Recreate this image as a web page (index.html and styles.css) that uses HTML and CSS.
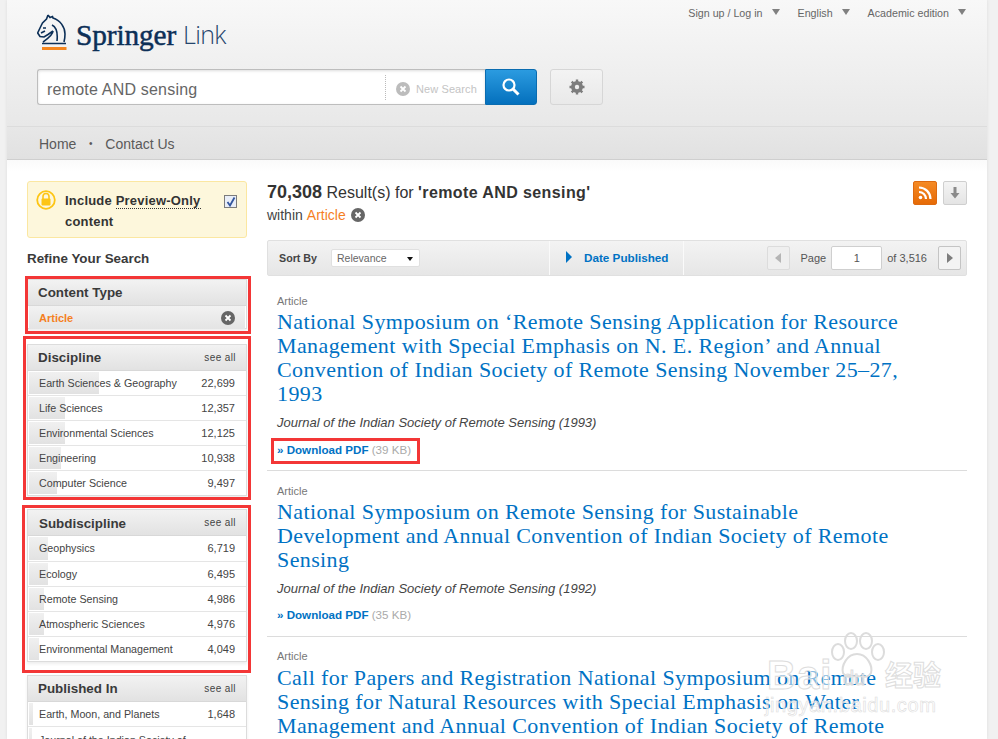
FILE: index.html
```html
<!DOCTYPE html>
<html lang="en">
<head>
<meta charset="utf-8">
<title>Springer Link</title>
<link rel="stylesheet" href="styles.css">
</head>
<body>
<div class="page">
  <header class="header">
    <div class="top">
      <a class="logo">
        <svg class="horse" viewBox="0 0 30 37" width="30" height="37">
          <path d="M11 1 L9.500 5 L5.500 9 L3 14 L0.700 19 L3 22.500 L7 23 L11 20.500 L16 17 M11 1 L13 3.500 L15.500 2.500 L16 4 C23 6 28 13 28 20 C28 24 27.500 26 27 28 M16 17 C16 21 10 25 6 28 M15 11 C19 13 21 18 20 27 M6 14 L9 14 M4 19 L8 17 M5 29.500 H29" fill="none" stroke="#0c2f57" stroke-width="1.600"/>
          <rect x="5" y="33" width="24.500" height="3" fill="#f5861f"/>
        </svg>
        <span class="brand">Springer</span><span class="brand-link">Link</span>
      </a>
      <nav class="account">
        <span class="drop">Sign up / Log in</span>
        <span class="drop">English</span>
        <span class="drop">Academic edition</span>
      </nav>
    </div>
    <div class="searchrow">
      <div class="searchbox">
        <span class="query">remote AND sensing</span>
        <span class="newsearch"><svg class="x" viewBox="0 0 14 14" width="14" height="14"><circle cx="7" cy="7" r="7" fill="#bcbcbc"/><path d="M4.500 4.500 L9.500 9.500 M9.500 4.500 L4.500 9.500" stroke="#fff" stroke-width="1.800"/></svg>New Search</span>
      </div>
      <button class="go"><svg viewBox="0 0 20 20" width="20" height="20"><circle cx="8" cy="8" r="5.500" fill="none" stroke="#fff" stroke-width="2.200"/><path d="M12 12 L17.500 17.500" stroke="#fff" stroke-width="3"/></svg></button>
      <button class="gear"><svg viewBox="0 0 16 16" width="16" height="16"><circle cx="8" cy="8" r="4.500" fill="none" stroke="#7d7d7d" stroke-width="3"/><path d="M8 0.500 V15.500 M0.500 8 H15.500 M2.700 2.700 L13.300 13.300 M13.300 2.700 L2.700 13.300" stroke="#7d7d7d" stroke-width="2.400"/><circle cx="8" cy="8" r="2.200" fill="#eee"/></svg></button>
    </div>
  </header>
  <nav class="crumbs"><a>Home</a><span class="dot">•</span><a>Contact Us</a></nav>
  <div class="content">
    <aside class="side">
      <div class="notice">
        <svg class="lock" viewBox="0 0 20 20" width="20" height="20"><circle cx="10" cy="10" r="8.800" fill="none" stroke="#fdc514" stroke-width="1.800"/><rect x="5.500" y="8.500" width="9" height="7" rx="1" fill="#fdc514"/><path d="M7 9 V6.500 A3 3 0 0 1 13 6.500 V9" fill="none" stroke="#fdc514" stroke-width="1.600"/></svg>
        <p class="notice-text">Include <span class="dotted">Preview-Only</span> content</p>
        <span class="check"><svg viewBox="0 0 10 10" width="10" height="10"><path d="M1.500 5 L4 8.500 L8.500 0.500" fill="none" stroke="#33569e" stroke-width="1.800"/></svg></span>
      </div>
      <h2 class="refine">Refine Your Search</h2>

      <section class="facet f-type">
        <h3 class="facet-head"><span>Content Type</span></h3>
        <div class="active-row"><span>Article</span><svg viewBox="0 0 14 14" width="14" height="14"><circle cx="7" cy="7" r="7" fill="#666"/><path d="M4.500 4.500 L9.500 9.500 M9.500 4.500 L4.500 9.500" stroke="#fff" stroke-width="1.800"/></svg></div>
      </section>

      <section class="facet f-disc">
        <h3 class="facet-head"><span>Discipline</span><a class="all">see all</a></h3>
        <ol class="rows">
          <li class="row"><i class="bar" style="width:70px"></i><span class="name">Earth Sciences &amp; Geography</span><span class="num">22,699</span></li>
          <li class="row"><i class="bar" style="width:36px"></i><span class="name">Life Sciences</span><span class="num">12,357</span></li>
          <li class="row"><i class="bar" style="width:36px"></i><span class="name">Environmental Sciences</span><span class="num">12,125</span></li>
          <li class="row"><i class="bar" style="width:32px"></i><span class="name">Engineering</span><span class="num">10,938</span></li>
          <li class="row"><i class="bar" style="width:28px"></i><span class="name">Computer Science</span><span class="num">9,497</span></li>
        </ol>
      </section>

      <section class="facet f-sub">
        <h3 class="facet-head"><span class="nudge">Subdiscipline</span><a class="all">see all</a></h3>
        <ol class="rows">
          <li class="row"><i class="bar" style="width:19px"></i><span class="name">Geophysics</span><span class="num">6,719</span></li>
          <li class="row"><i class="bar" style="width:19px"></i><span class="name">Ecology</span><span class="num">6,495</span></li>
          <li class="row"><i class="bar" style="width:15px"></i><span class="name">Remote Sensing</span><span class="num">4,986</span></li>
          <li class="row"><i class="bar" style="width:15px"></i><span class="name">Atmospheric Sciences</span><span class="num">4,976</span></li>
          <li class="row"><i class="bar" style="width:10px"></i><span class="name">Environmental Management</span><span class="num">4,049</span></li>
        </ol>
      </section>

      <section class="facet">
        <h3 class="facet-head"><span>Published In</span><a class="all">see all</a></h3>
        <ol class="rows">
          <li class="row"><i class="bar" style="width:4px"></i><span class="name">Earth, Moon, and Planets</span><span class="num">1,648</span></li>
          <li class="row"><i class="bar" style="width:3px"></i><span class="name">Journal of the Indian Society of</span></li>
        </ol>
      </section>
    </aside>

    <main class="main">
      <div class="summary">
        <div>
          <h1 class="count"><b>70,308</b> Result(s) for <b class="q">'remote AND sensing'</b></h1>
          <p class="within">within <a class="orange">Article</a><svg class="x" viewBox="0 0 14 14" width="14" height="14"><circle cx="7" cy="7" r="7" fill="#666"/><path d="M4.500 4.500 L9.500 9.500 M9.500 4.500 L4.500 9.500" stroke="#fff" stroke-width="1.800"/></svg></p>
        </div>
        <div class="tools">
          <a class="rss"><svg viewBox="0 0 14 14" width="14" height="14"><circle cx="2.500" cy="11.500" r="1.800" fill="#fff"/><path d="M1 6 A7 7 0 0 1 8 13 M1 1.500 A11.500 11.500 0 0 1 12.500 13" fill="none" stroke="#fff" stroke-width="2.200"/></svg></a>
          <a class="save"><svg viewBox="0 0 10 12" width="10" height="12"><path d="M3.500 0 H6.500 V6 H9.500 L5 11.500 L0.500 6 H3.500 Z" fill="#8a8a8a"/></svg></a>
        </div>
      </div>

      <div class="sortbar">
        <div class="sort"><b>Sort By</b><span class="select">Relevance<i class="caret"></i></span></div>
        <a class="date"><i class="tri-blue"></i>Date Published</a>
        <div class="pager">
          <span class="pbtn"><i class="tri-l"></i></span>
          <span>Page</span>
          <span class="pinput">1</span>
          <span>of 3,516</span>
          <span class="pbtn next"><i class="tri-r"></i></span>
        </div>
      </div>

      <ol class="results">
        <li class="result r1">
          <p class="kind">Article</p>
          <h2 class="title">National Symposium on ‘Remote Sensing Application for Resource<br>Management with Special Emphasis on N. E. Region’ and Annual<br>Convention of Indian Society of Remote Sensing November 25–27,<br>1993</h2>
          <p class="journal">Journal of the Indian Society of Remote Sensing (1993)</p>
          <p class="pdf"><a>» Download PDF</a> <span>(39 KB)</span></p>
        </li>
        <li class="result r2">
          <p class="kind">Article</p>
          <h2 class="title">National Symposium on Remote Sensing for Sustainable<br>Development and Annual Convention of Indian Society of Remote<br>Sensing</h2>
          <p class="journal">Journal of the Indian Society of Remote Sensing (1992)</p>
          <p class="pdf"><a>» Download PDF</a> <span>(35 KB)</span></p>
        </li>
        <li class="result r3">
          <p class="kind">Article</p>
          <h2 class="title">Call for Papers and Registration National Symposium on Remote<br>Sensing for Natural Resources with Special Emphasis on Water<br>Management and Annual Convention of Indian Society of Remote</h2>
        </li>
      </ol>
    </main>
  </div>

  <i class="mark m1"></i><i class="mark m2"></i><i class="mark m3"></i><i class="mark m4"></i>

  <div class="watermark">
    <svg class="paw" viewBox="0 0 60 50" width="60" height="50"><g fill="none" stroke="#dcdcdc" stroke-width="2"><ellipse cx="11" cy="20" rx="6" ry="8"/><ellipse cx="24" cy="9" rx="6" ry="8"/><ellipse cx="39" cy="9" rx="6" ry="8"/><ellipse cx="51" cy="20" rx="6" ry="8"/><path d="M30 22 C40 22 46 34 44 41 C41 47 35 44 30 44 C25 44 19 47 16 41 C14 34 20 22 30 22 Z"/></g></svg>
    <span class="wm-bai">Bai</span><span class="wm-du">du</span><span class="wm-cn">经验</span>
    <span class="wm-url">jingyan.baidu.com</span>
  </div>
</div>
</body>
</html>
```
FILE: styles.css
```css
* { box-sizing: border-box; }
html, body { margin: 0; height: 739px; overflow: hidden; }
body { background: #f1f1f1; font-family: "Liberation Sans", Arial, sans-serif; color: #333; }
p, h1, h2, h3, ol { margin: 0; padding: 0; font-weight: normal; }
ol { list-style: none; }
button { padding: 0; cursor: pointer; }
.page { position: relative; width: 980px; height: 739px; margin-left: 7px; background: #fff; overflow: hidden; box-shadow: 0 0 3px #ddd; }

.header { height: 127px; padding: 0 20px; background: linear-gradient(#f8f8f8, #e8e8e8); border-bottom: 1px solid #dcdcdc; }
.top { display: flex; justify-content: space-between; align-items: flex-start; height: 69px; }
.logo { display: flex; align-items: flex-start; padding: 14px 0 0 10px; }
.horse { display: block; flex: none; }
.brand { margin: 1px 0 0 9px; font: 29.300px/40px "Liberation Serif", serif; color: #0c2f57; letter-spacing: -0.1px; -webkit-text-stroke: 0.5px #0c2f57; }
.brand-link { margin: 2px 0 0 7px; font: 300 25px/36px "Open Sans", sans-serif; color: #25456d; letter-spacing: -0.7px; }
.account { display: flex; gap: 18px; padding: 7px 0 0; margin-right: 1px; font-size: 10.700px; line-height: 13px; color: #666; }
.drop { display: flex; align-items: center; gap: 9px; }
.drop::after { content: ""; border: 4px solid transparent; border-top: 6px solid #808080; border-bottom: 0; margin-top: -3px; }

.searchrow { display: flex; }
.searchbox { display: flex; justify-content: space-between; align-items: center; width: 448px; height: 36px; margin-left: 10px; padding-left: 9px; background: #fff; border: 1px solid #bdbdbd; border-right: 0; border-radius: 3px 0 0 3px; box-shadow: inset 0 1px 3px #ddd; }
.query { padding-top: 6px; font-size: 16px; color: #666; letter-spacing: 0.2px; }
.newsearch { display: flex; align-items: center; height: 25px; width: 100px; padding: 4px 0 0 10px; border-left: 1px dotted #bbb; font-size: 11px; line-height: 15px; color: #c4c4c4; letter-spacing: 0.1px; }
.newsearch .x { margin-right: 6px; }
.go { display: flex; align-items: center; justify-content: center; width: 52px; height: 36px; border: 1px solid #0a6cb0; border-radius: 0 3px 3px 0; background: linear-gradient(#2b9be0, #0470bd); }
.gear { display: flex; align-items: center; justify-content: center; width: 53px; height: 36px; margin-left: 13px; border: 1px solid #d6d6d6; border-radius: 3px; background: linear-gradient(#f3f3f3, #e9e9e9); }

.crumbs { display: flex; align-items: center; height: 33px; padding: 1px 0 0 32px; background: linear-gradient(#e7e7e7, #e1e1e1); border-bottom: 1px solid #cfcfcf; font-size: 14px; color: #5a5a5a; }
.dot { width: 29px; text-align: center; font-size: 10px; }

.content { display: flex; gap: 20px; padding: 21px 20px 0; height: 579px; background: linear-gradient(#fafafa, #fff 12px); }
.side { flex: none; width: 220px; }
.main { flex: none; width: 700px; }

.notice { display: flex; position: relative; height: 57px; padding: 8px 0 0 8px; background: #fdf7dc; border: 1px solid #fbe7a1; border-radius: 3px; }
.lock { flex: none; margin-top: 0; }
.notice-text { width: 145px; margin-left: 9px; font-size: 13px; line-height: 21px; font-weight: bold; color: #333; letter-spacing: 0.2px; }
.dotted { border-bottom: 1px dotted #333; }
.check { position: absolute; right: 9px; top: 13px; display: flex; align-items: center; justify-content: center; width: 13px; height: 13px; background: #e9eef8; border: 1px solid #7c7c7c; }

.refine { height: 41px; padding-top: 13px; font-size: 13.400px; line-height: 16px; font-weight: bold; color: #3a3a3a; }

.facet { margin-bottom: 13px; border: 1px solid #dcdcdc; box-shadow: 0 2px 3px #eee; }
.f-type { margin-bottom: 15px; height: 50px; }
.f-disc { height: 152px; }
.f-sub { height: 153px; }
.facet-head { display: flex; justify-content: space-between; align-items: center; height: 26px; padding: 0 10px 1px 10px; background: linear-gradient(#f2f2f2, #e2e2e2); border-bottom: 1px solid #d8d8d8; font-size: 13.400px; font-weight: bold; color: #3a3a3a; }
.nudge { margin: 2px 0 0 1px; }
.all { padding-top: 1px; font-size: 10px; font-weight: normal; letter-spacing: 0.4px; color: #444; }
.active-row { display: flex; justify-content: space-between; align-items: center; height: 23px; margin: 0 1px; padding: 0 10px; background: linear-gradient(#f2f2f2, #e4e4e4); font-size: 11px; font-weight: bold; color: #f5801f; }
.rows { background: #fff; }
.row { display: flex; justify-content: space-between; align-items: center; position: relative; height: 25px; padding: 0 11px 0 11px; border-bottom: 1px solid #e5e5e5; font-size: 10.700px; color: #444; }
.row:last-child { border-bottom: 0; }
.f-disc .row:last-child { height: 24px; }
.f-sub .row:first-child { height: 26px; padding-bottom: 1px; }
.f-sub .row:last-child { height: 24px; }
.bar { position: absolute; left: 1px; top: 1px; bottom: 1px; background: linear-gradient(#f0f0f0, #e2e2e2); }
.name, .num { position: relative; }
.num { font-size: 11px; }

.summary { display: flex; justify-content: space-between; height: 59px; }
.count { font-size: 16px; line-height: 22px; color: #333; }
.count b:first-child { font-size: 18px; }
.q { letter-spacing: 0.4px; }
.within { display: flex; align-items: center; margin-top: 2px; font-size: 14px; line-height: 18px; color: #444; }
.orange { margin-left: 4px; color: #f5801f; }
.within .x { margin-left: 5px; }
.tools { display: flex; gap: 6px; }
.tools a { display: flex; align-items: center; justify-content: center; width: 24px; height: 24px; border-radius: 2px; }
.rss { background: linear-gradient(#f58a24, #e66a06); border: 1px solid #dd6a10; }
.save { background: linear-gradient(#f4f4f4, #e4e4e4); border: 1px solid #cfcfcf; }

.sortbar { display: flex; height: 36px; background: linear-gradient(#f3f3f3, #e6e6e6); border: 1px solid #e0e0e0; border-radius: 2px; }
.sort { display: flex; align-items: center; width: 282px; padding-left: 11px; border-right: 1px solid #fafafa; font-size: 10.700px; color: #444; }
.select { display: flex; justify-content: space-between; align-items: center; width: 89px; height: 18px; margin-left: 14px; padding: 0 6px 0 5px; background: #fff; border: 1px solid #e0e0e0; border-radius: 2px; font-size: 10.500px; color: #666; }
.caret { border: 3.500px solid transparent; border-top: 4px solid #111; border-bottom: 0; margin-top: 2px; }
.date { display: flex; align-items: center; width: 134px; padding: 0 0 2px 16px; border-right: 1px solid #fafafa; font-size: 11.700px; font-weight: bold; color: #0072c4; }
.tri-blue { margin-right: 12px; border: 6px solid transparent; border-left: 6px solid #0072c4; border-right: 0; }
.pager { display: flex; flex: 1; align-items: center; justify-content: flex-end; gap: 5px; padding-right: 5px; font-size: 11px; color: #555; }
.pbtn { display: flex; align-items: center; justify-content: center; width: 23px; height: 24px; margin-right: 6px; background: #efefef; border: 1px solid #dcdcdc; border-radius: 2px; }
.next { margin: 0 0 0 6px; background: #f3f3f3; border-color: #c4c4c4; }
.tri-l { border: 5px solid transparent; border-right: 6px solid #b5b5b5; border-left: 0; }
.tri-r { border: 5px solid transparent; border-left: 6px solid #7d7d7d; border-right: 0; }
.pinput { width: 51px; height: 24px; background: #fff; border: 1px solid #cfcfcf; border-radius: 2px; text-align: center; line-height: 22px; }

.result { padding: 0 10px; border-bottom: 1px solid #dcdcdc; }
.r1 { height: 195px; padding-top: 19px; }
.r2 { height: 166px; padding-top: 14px; }
.r3 { padding-top: 13px; border: 0; }
.kind { font-size: 11px; line-height: 13px; color: #777; }
.title { margin-top: 2px; font: 22px/24px "Liberation Serif", serif; letter-spacing: 0.39px; color: #0072c4; white-space: nowrap; }
.r3 .title { margin-top: 3px; }
.journal { margin-top: 7px; font-size: 13px; line-height: 20px; font-style: italic; color: #444; }
.pdf { margin-top: 8px; font-size: 11.600px; line-height: 16px; color: #aaa; }
.r1 .pdf { margin-top: 9px; }
.pdf a { font-weight: bold; color: #0072c4; }

.mark { position: absolute; border: 3px solid #f33636; }
.m1 { left: 18px; top: 276px; width: 226px; height: 58px; }
.m2 { left: 16px; top: 336px; width: 228px; height: 164px; }
.m3 { left: 15px; top: 505px; width: 229px; height: 168px; }
.m4 { left: 264px; top: 438px; width: 149px; height: 26px; }

.watermark { position: absolute; left: 760px; top: 630px; width: 220px; height: 109px; }
.paw { position: absolute; left: 60px; top: 2px; }
.wm-bai, .wm-du, .wm-cn, .wm-url { position: absolute; color: rgba(255, 255, 255, 0.55); -webkit-text-stroke: 1px #dddddd; }
.wm-bai { left: 0; top: 23px; font: bold 40px/44px "Liberation Sans", sans-serif; letter-spacing: 1px; }
.wm-du { left: 76px; top: 36px; font: 20px/24px "Liberation Sans", sans-serif; }
.wm-cn { left: 118px; top: 26px; font: bold 28px/36px "Noto Sans CJK SC", sans-serif; }
.wm-url { left: -2px; top: 64px; font: 20px/22px "Liberation Sans", sans-serif; letter-spacing: 0.6px; -webkit-text-stroke: 0.6px #dddddd; }
```
